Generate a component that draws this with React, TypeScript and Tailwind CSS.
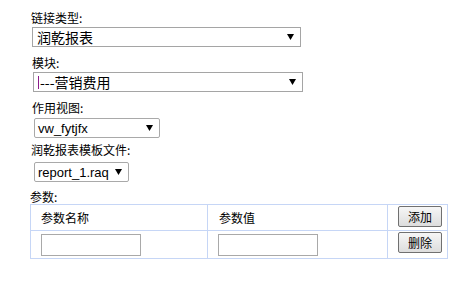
import React from "react";

const cjk = { fontFamily: '"Noto Sans CJK SC", "Noto Sans", sans-serif' };
const arial = { fontFamily: '"Liberation Sans", Arial, "Noto Sans CJK SC", sans-serif' };

function Arrow() {
  return (
    <svg width="7" height="6" viewBox="0 0 7 6" className="shrink-0">
      <polygon points="0,0 7,0 3.5,6" fill="#000" />
    </svg>
  );
}

function Select({ w, text, font, square, className = "" }: { w: string; text: React.ReactNode; font: React.CSSProperties; square?: boolean; className?: string }) {
  return (
    <div
      className={`${w} h-[20px] flex items-center justify-between bg-white border ${square ? "border-[#a5a5a5]" : "border-[#a9a9a9] rounded-[2px]"} pl-[3px] pr-[6px] text-black ${className}`}
      style={font}
    >
      <span className="leading-none whitespace-nowrap">{text}</span>
      <Arrow />
    </div>
  );
}

function Label({ children, className = "" }: { children: React.ReactNode; className?: string }) {
  return (
    <div className={`text-[12px] leading-[14px] text-black ${className}`} style={cjk}>
      {children}
    </div>
  );
}

function Button({ children }: { children: React.ReactNode }) {
  return (
    <div
      className="w-[44px] h-[21px] flex items-center justify-center border border-[#707070] rounded-[2px] bg-gradient-to-b from-[#f6f6f6] to-[#dddddd] text-[12px] text-black"
      style={cjk}
    >
      {children}
    </div>
  );
}

export default function App() {
  return (
    <div className="w-[457px] h-[291px] bg-white pl-[30px] pt-[11px]">
      <Label className="pl-[1px]">链接类型:</Label>
      <Select w="w-[269px]" square className="ml-[2px] mt-[2px] text-[14px]" font={cjk} text={<span className="pl-[1px]">润乾报表</span>} />
      <Label className="pl-[2px] mt-[9px]">模块:</Label>
      <Select
        w="w-[270px]"
        square
        className="ml-[3px] mt-[2px] text-[14px]"
        font={cjk}
        text={
          <span className="flex items-center">
            <span className="inline-block w-[1px] h-[13px] bg-[#8b1c8b] ml-[1px] mr-[1px]" />
            <span>---营销费用</span>
          </span>
        }
      />
      <Label className="pl-[2px] mt-[9px]">作用视图:</Label>
      <Select w="w-[126px]" className="ml-[4px] mt-[3px] text-[13px]" font={arial} text="vw_fytjfx" />
      <Label className="pl-[1px] mt-[5px]">润乾报表模板文件:</Label>
      <Select w="w-[95px]" className="ml-[4px] mt-[5px] text-[13px]" font={arial} text="report_1.raq" />
      <Label className="mt-[8px]">参数:</Label>
      <div className="mt-[0px] w-[418px] border border-[#c6d6f6]" style={cjk}>
        <div className="flex h-[26px] border-b border-[#c6d6f6]">
          <div className="w-[177px] border-r border-[#c6d6f6] flex items-center pl-[10px] text-[12px]">参数名称</div>
          <div className="w-[180px] border-r border-[#c6d6f6] flex items-center pl-[11px] text-[12px]">参数值</div>
          <div className="flex-1 flex items-start pt-[1px] pl-[10px]">
            <Button>添加</Button>
          </div>
        </div>
        <div className="flex h-[27px]">
          <div className="w-[177px] border-r border-[#c6d6f6] flex items-center pl-[10px]">
            <div className="w-[100px] h-[22px] border border-[#a9a9a9] bg-white" />
          </div>
          <div className="w-[180px] border-r border-[#c6d6f6] flex items-center pl-[10px]">
            <div className="w-[100px] h-[22px] border border-[#a9a9a9] bg-white" />
          </div>
          <div className="flex-1 flex items-start pt-[1px] pl-[10px]">
            <Button>删除</Button>
          </div>
        </div>
      </div>
    </div>
  );
}
